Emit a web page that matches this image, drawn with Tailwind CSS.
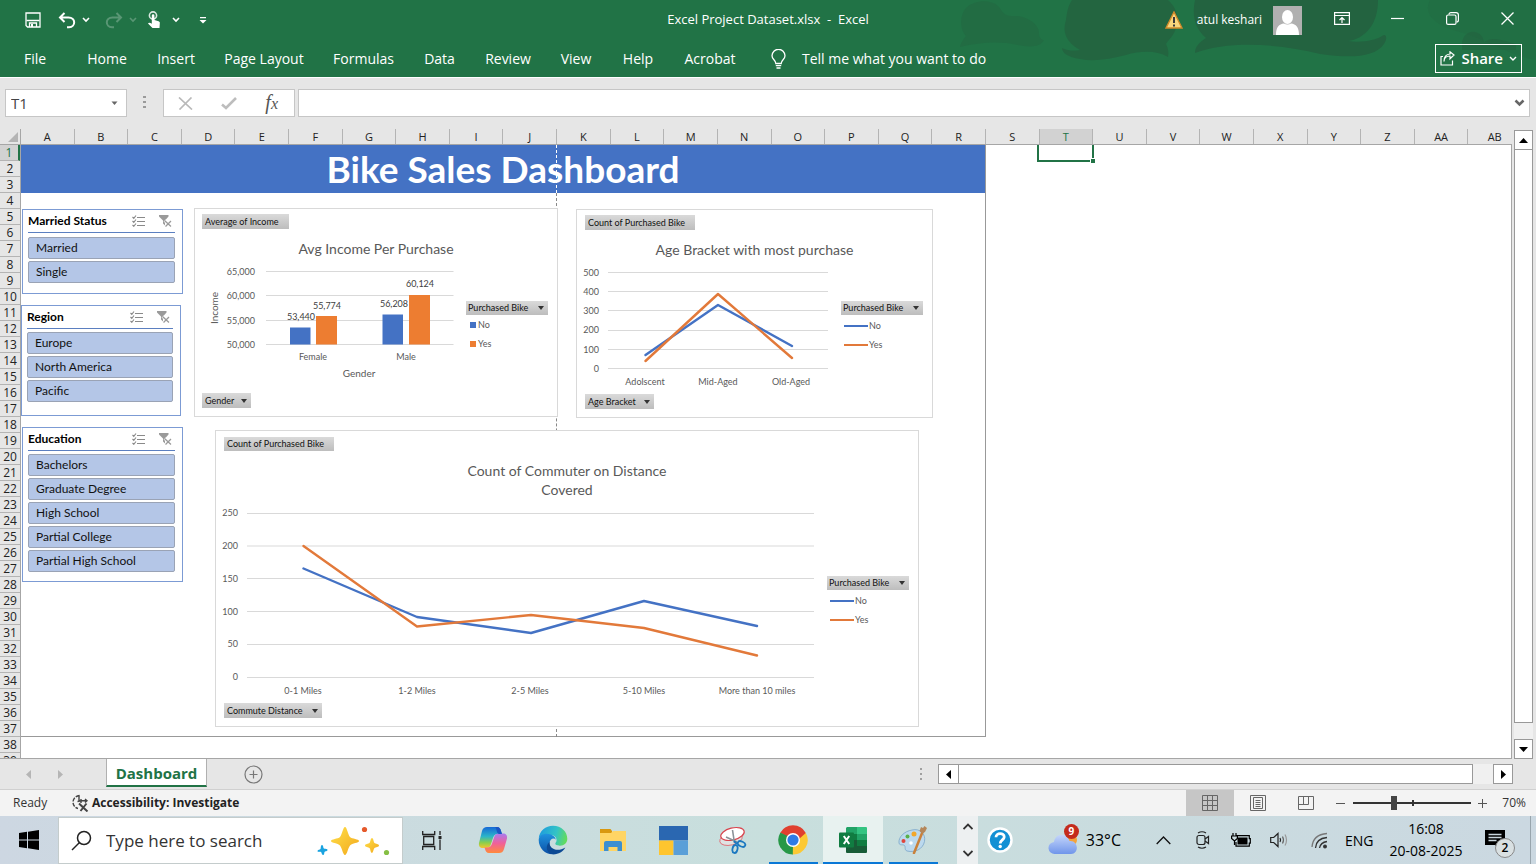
<!DOCTYPE html>
<html lang="en">
<head>
<meta charset="utf-8">
<meta name="viewport" content="width=device-width, initial-scale=1">
<title>Excel Project Dataset.xlsx - Excel</title>
<script src="https://cdn.jsdelivr.net/npm/@tailwindcss/browser@4"></script>
</head>
<body class="h-screen flex flex-col overflow-hidden bg-[#e6e6e6] text-[#222] font-['Open_Sans','Noto_Sans',sans-serif]">

<!-- Title bar and ribbon tabs -->
<header class="relative shrink-0 bg-[#217346] text-white">
  <svg class="absolute right-0 top-0" width="576" height="77" viewBox="0 0 576 77" fill="#236340" aria-hidden="true">
    <path opacity=".45" d="M0 47C1 42 3 40 6 36C0 30 -1 16 6 8C14 0 30 -1 38 6C42 10 43 16 52 16C66 15 80 24 79 34C79 38 82 40 84 40C80 48 68 47 58 45C40 41 20 42 0 47Z"/>
    <path opacity=".85" d="M112 0H208C215 6 220 16 216 28C214 36 208 40 206 44C208 48 209 52 208 57C196 50 180 51 166 55C150 59 134 62 120 59C108 57 102 53 102 48C108 51 114 51 120 50C106 42 102 32 106 20C107 12 108 6 112 0Z"/>
    <path d="M235 0H418C418 10 416 20 410 28C404 36 396 40 388 41C402 43 416 40 422 36C426 33 428 38 424 44C414 58 390 58 360 54C320 44 270 40 235 53C235 46 240 42 246 38C234 28 232 14 235 0Z"/>
    <path opacity=".6" d="M502 44C503 28 522 28 524 42C532 36 542 40 556 44V50H502Z"/>
    <path opacity=".25" d="M470 0H576V60C550 56 530 40 500 32C478 26 462 16 470 0Z"/>
  </svg>

  <div class="relative flex h-10 items-center">
    <div class="flex flex-1 items-center">
      <button aria-label="Save" class="ml-[25px] w-[33px]"><svg width="16" height="16" viewBox="0 0 16 16" fill="none" stroke="#fff" stroke-width="1.3"><path d="M1 1H15V15H2.500L1 13.500Z"/><path d="M1.500 8.500H14.500M4.500 15V11H11.500V15"/><path fill="#fff" d="M6 12h2v3H6z" stroke="none"/></svg></button>
      <button aria-label="Undo" class="w-[24px]"><svg width="18" height="17" viewBox="0 0 18 17" fill="none" stroke="#fff" stroke-width="2"><path d="M6.500 1L2 5.500L6.500 10M2 5.500H10.500C18 5.500 18 15 11 15.300H9"/></svg></button>
      <button aria-label="Undo options" class="w-[23px]"><svg width="8" height="6" viewBox="0 0 8 6" fill="none" stroke="#fff" stroke-width="1.600"><path d="M1 1L4 4L7 1"/></svg></button>
      <button aria-label="Redo" class="w-[24px] opacity-25"><svg width="18" height="17" viewBox="0 0 18 17" fill="none" stroke="#fff" stroke-width="2"><path d="M11.500 1L16 5.500L11.500 10M16 5.500H7.500C0 5.500 0 15 7 15.300H9"/></svg></button>
      <button aria-label="Redo options" class="w-[18px] opacity-25"><svg width="8" height="6" viewBox="0 0 8 6" fill="none" stroke="#fff" stroke-width="1.600"><path d="M1 1L4 4L7 1"/></svg></button>
      <button aria-label="Touch mode" class="w-[25px]"><svg width="14" height="18" viewBox="0 0 14 18"><circle cx="6" cy="4.500" r="3.600" fill="none" stroke="#d8e8df" stroke-width="1.600"/><path fill="#fff" d="M4.800 4.500a1.300 1.300 0 0 1 2.600 0V9l4.200 1.200c1.200.4 1.400 1.300 1.200 2.300L12.500 17H5.500L1 12.500c.6-1.200 2-1.200 3.800.3Z"/></svg></button>
      <button aria-label="Touch mode options" class="w-[27px]"><svg width="8" height="6" viewBox="0 0 8 6" fill="none" stroke="#fff" stroke-width="1.600"><path d="M1 1L4 4L7 1"/></svg></button>
      <button aria-label="Customize Quick Access Toolbar"><svg width="8" height="7" viewBox="0 0 8 7" fill="#fff"><path d="M1 0h6v1.300H1zM0.500 3h7L4 6.500z"/></svg></button>
    </div>
    <h1 class="whitespace-pre text-[13px]">Excel Project Dataset.xlsx  -  Excel</h1>
    <div class="flex flex-1 items-center justify-end">
      <svg class="mr-[14px]" width="18" height="18" viewBox="0 0 18 18"><path d="M9 1L17 17H1Z" fill="#f9d67c" stroke="#d08a2a" stroke-width="1.400"/><path d="M8 6h2v6H8zM8 13.500h2v2H8z" fill="#3a3a3a"/></svg>
      <span class="mr-[11px] text-[12px]">atul keshari</span>
      <svg class="mr-8" width="29" height="29" viewBox="0 0 29 29"><path fill="#b0b0b0" d="M0 0h29v29H0z"/><ellipse cx="14.500" cy="11" rx="5.500" ry="7" fill="#fff"/><path fill="#fff" d="M3 29c0-8 3-11 8-11.500c2 1.300 5 1.300 7 0c5 .5 8 3.500 8 11.500z"/></svg>
      <button aria-label="Ribbon display options" class="mb-[3px] mr-[41px]"><svg width="16" height="13" viewBox="0 0 16 13" fill="none" stroke="#fff" stroke-width="1.200"><path d="M.6.6h14.800v11.800H.6zM.6 3.500h14.800M8 11V5.500M5.500 8L8 5.500L10.500 8"/></svg></button>
      <button aria-label="Minimize" class="mb-[3px] mr-[42px]"><svg width="13" height="12" viewBox="0 0 13 12" stroke="#fff" stroke-width="1.200"><path d="M0 5.500h13"/></svg></button>
      <button aria-label="Restore" class="mb-[3px] mr-[42px]"><svg width="13" height="13" viewBox="0 0 13 13" fill="none" stroke="#fff" stroke-width="1.200"><rect x=".6" y="3" width="9.400" height="9.400" rx="1.500"/><path d="M3 2.500C3 1.400 3.700.6 5 .6h5c1.500 0 2.400.9 2.400 2.400v5c0 1.200-.8 2-1.800 2"/></svg></button>
      <button aria-label="Close" class="mb-[3px] mr-[22px]"><svg width="13" height="13" viewBox="0 0 13 13" stroke="#fff" stroke-width="1.300"><path d="M.5.5l12 12M12.500.5l-12 12"/></svg></button>
    </div>
  </div>

  <div class="relative flex h-[37px] items-center text-[14px]">
    <nav class="grid grid-cols-[70px_74px_64px_112px_87px_65px_72px_64px_60px_84px] text-center">
      <button>File</button><button>Home</button><button>Insert</button><button>Page Layout</button><button>Formulas</button><button>Data</button><button>Review</button><button>View</button><button>Help</button><button>Acrobat</button>
    </nav>
    <button class="flex items-center gap-4 pl-[19px]">
      <svg width="15" height="20" viewBox="0 0 15 20" fill="none" stroke="#fff" stroke-width="1.300"><path d="M4.800 14.500C4.800 11 1 10.500 1 6.800a6.500 6.500 0 0 1 13 0c0 3.700-3.800 4.200-3.800 7.700zM4.800 16.700h5.400M5.500 19h4"/></svg>
      <span>Tell me what you want to do</span>
    </button>
    <button class="ml-auto mr-[14px] flex h-[29px] items-center gap-[6px] border border-white px-1 font-semibold">
      <svg width="15" height="15" viewBox="0 0 15 15" fill="none" stroke="#fff" stroke-width="1.200"><path d="M3 5.500H1V14h11.500V9.500M4 10.500C4 6.500 7 5 10 5V7.800L14 4L10 .8V3C6 3.200 4 6 4 10.500Z"/></svg>
      <span class="text-[15px]">Share</span>
      <svg width="8" height="6" viewBox="0 0 8 6" fill="none" stroke="#fff" stroke-width="1.400"><path d="M1 1L4 4L7 1"/></svg>
    </button>
  </div>
</header>

<!-- Name box and formula bar -->
<div class="flex h-[52px] shrink-0 items-start border-t border-white pl-[5px] pr-[6px] pt-[11px]">
  <div class="flex h-7 w-[122px] items-center border border-[#c6c6c6] bg-white">
    <input aria-label="Name box" value="T1" class="w-[105px] pl-[5px] text-[15px] text-[#444] outline-none">
    <button aria-label="Name box list"><svg width="7" height="5" viewBox="0 0 7 5" fill="#666"><path d="M.5.5h6L3.500 4z"/></svg></button>
  </div>
  <svg class="mx-[15px] mt-[7px]" width="6" height="14" viewBox="0 0 6 14" fill="#9a9a9a"><path d="M1 0h3v2H1zM1 5h3v2H1zM1 10h3v2H1z"/></svg>
  <div class="flex h-7 w-[132px] items-center justify-between border border-[#c6c6c6] bg-white pl-[14px] pr-[14px]">
    <button aria-label="Cancel"><svg width="15" height="13" viewBox="0 0 15 13" fill="none" stroke="#b9b9b9" stroke-width="1.700"><path d="M1 .5L14 12.500M13.500.5L1.500 12.500"/></svg></button>
    <button aria-label="Enter"><svg width="16" height="13" viewBox="0 0 16 13" fill="none" stroke="#bdbdbd" stroke-width="2.600"><path d="M1 7.500L5 11L15 1"/></svg></button>
    <button aria-label="Insert function" class="pr-[2px] font-['Liberation_Serif',serif] text-[20px] italic leading-5 text-[#555]">f<span class="text-[16px]">x</span></button>
  </div>
  <div class="ml-[3px] flex h-7 flex-1 items-center border border-[#c6c6c6] bg-white pr-1">
    <input aria-label="Formula bar" class="min-w-0 flex-1 px-2 outline-none">
    <button aria-label="Expand formula bar"><svg width="11" height="8" viewBox="0 0 11 8" fill="none" stroke="#666" stroke-width="2.500"><path d="M1.500 1.500L5.500 5.500L9.500 1.500"/></svg></button>
  </div>
</div>

<!-- Worksheet -->
<main class="flex min-h-0 flex-1">
  <div class="grid min-w-0 flex-1 grid-cols-[21px_minmax(0,1fr)] grid-rows-[16px_minmax(0,1fr)] border-b border-[#a6a6a6]">
    <div class="flex items-end justify-end border-b border-r border-[#a6a6a6] pb-[2px] pr-[2px]">
      <svg width="10" height="10" viewBox="0 0 10 10" fill="#b4b4b4"><path d="M10 0v10H0z"/></svg>
    </div>
    <div class="overflow-hidden border-b border-[#a6a6a6]">
      <div id="cols" class="grid h-[15px] w-[1501px] grid-cols-28 text-center text-[11px] leading-4 text-[#222]"></div>
    </div>
    <div id="rows" class="overflow-hidden border-r border-[#a6a6a6] text-center text-[12px] leading-4 text-[#222]"></div>

    <div class="relative overflow-hidden border-r border-[#a6a6a6] bg-white">
      <div class="absolute left-0 top-0 h-[592px] w-[965px] border-b border-r border-[#999]"></div>
      <h2 class="absolute left-0 top-0 flex h-12 w-[964px] items-center justify-center bg-[#4472c4] font-['Lato',sans-serif] text-[37px] font-bold text-white">Bike Sales Dashboard</h2>
      <!-- Page break -->
      <div class="absolute left-[535px] top-0 h-12 border-l border-dashed border-white"></div>
      <div class="absolute left-[535px] top-12 h-[544px] border-l border-dashed border-[#888]"></div>
      <!-- Selected cell -->
      <div class="absolute left-[1016px] top-[-2px] h-[19px] w-[57px] border-2 border-[#217346]"></div>
      <div class="absolute left-[1069px] top-[13px] h-[5px] w-[5px] border-l border-t border-white bg-[#217346]"></div>

      <!-- Slicers -->
      <section class="absolute left-px top-16 h-[85px] w-[161px] border border-[#7c9bd4] bg-white pl-[5px] pr-[7px] font-['Lato',sans-serif] text-[12px] text-[#111]" aria-label="Married Status">
        <div class="mb-1 flex h-[23px] items-center border-b border-[#5b7fc0]">
          <h3 class="flex-1 whitespace-nowrap text-[12px] font-bold text-black">Married Status</h3>
          <button aria-label="Multi-select" class="mr-[14px]"><svg width="13" height="12"><use href="#multi"/></svg></button>
          <button aria-label="Clear filter" class="mr-[3px]"><svg width="13" height="12"><use href="#clear"/></svg></button>
        </div>
        <div class="flex flex-col gap-[2px]">
          <button class="h-[22px] rounded-[2px] border border-[#9aa3b5] bg-[#b4c6e7] pl-[7px] text-left">Married</button>
          <button class="h-[22px] rounded-[2px] border border-[#9aa3b5] bg-[#b4c6e7] pl-[7px] text-left">Single</button>
        </div>
      </section>
      <section class="absolute left-0 top-40 h-[111px] w-[160px] border border-[#7c9bd4] bg-white pl-[5px] pr-[7px] font-['Lato',sans-serif] text-[12px] text-[#111]" aria-label="Region">
        <div class="mb-[3px] flex h-[23px] items-center border-b border-[#5b7fc0]">
          <h3 class="flex-1 whitespace-nowrap text-[12px] font-bold text-black">Region</h3>
          <button aria-label="Multi-select" class="mr-[14px]"><svg width="13" height="12"><use href="#multi"/></svg></button>
          <button aria-label="Clear filter" class="mr-[3px]"><svg width="13" height="12"><use href="#clear"/></svg></button>
        </div>
        <div class="flex flex-col gap-[2px]">
          <button class="h-[22px] rounded-[2px] border border-[#9aa3b5] bg-[#b4c6e7] pl-[7px] text-left">Europe</button>
          <button class="h-[22px] rounded-[2px] border border-[#9aa3b5] bg-[#b4c6e7] pl-[7px] text-left">North America</button>
          <button class="h-[22px] rounded-[2px] border border-[#9aa3b5] bg-[#b4c6e7] pl-[7px] text-left">Pacific</button>
        </div>
      </section>
      <section class="absolute left-px top-[282px] h-[155px] w-[161px] border border-[#7c9bd4] bg-white pl-[5px] pr-[7px] font-['Lato',sans-serif] text-[12px] text-[#111]" aria-label="Education">
        <div class="mb-[3px] flex h-[23px] items-center border-b border-[#5b7fc0]">
          <h3 class="flex-1 whitespace-nowrap text-[12px] font-bold text-black">Education</h3>
          <button aria-label="Multi-select" class="mr-[14px]"><svg width="13" height="12"><use href="#multi"/></svg></button>
          <button aria-label="Clear filter" class="mr-[3px]"><svg width="13" height="12"><use href="#clear"/></svg></button>
        </div>
        <div class="flex flex-col gap-[2px]">
          <button class="h-[22px] rounded-[2px] border border-[#9aa3b5] bg-[#b4c6e7] pl-[7px] text-left">Bachelors</button>
          <button class="h-[22px] rounded-[2px] border border-[#9aa3b5] bg-[#b4c6e7] pl-[7px] text-left">Graduate Degree</button>
          <button class="h-[22px] rounded-[2px] border border-[#9aa3b5] bg-[#b4c6e7] pl-[7px] text-left">High School</button>
          <button class="h-[22px] rounded-[2px] border border-[#9aa3b5] bg-[#b4c6e7] pl-[7px] text-left">Partial College</button>
          <button class="h-[22px] rounded-[2px] border border-[#9aa3b5] bg-[#b4c6e7] pl-[7px] text-left">Partial High School</button>
        </div>
      </section>

      <!-- Income chart -->
      <section class="absolute left-[173px] top-[63px] flex h-[209px] w-[364px] flex-col items-start border border-[#d9d9d9] bg-white pl-[7px] pt-[5px] font-['Lato',sans-serif] text-[9px] text-[#595959]">
        <button class="h-[15px] w-[87px] bg-linear-to-b from-[#dadada] to-[#bdbdbd] pl-[3px] text-left text-[#111]">Average of Income</button>
        <h3 class="mt-2 h-6 w-full pr-[7px] text-center text-[14px] leading-6">Avg Income Per Purchase</h3>
        <div class="flex">
          <svg width="258" height="124" viewBox="202 261 258 124" fill="#595959">
            <path d="M266 271.500H453.500M266 295.500H453.500M266 320.500H453.500M266 344.500H453.500" stroke="#d9d9d9" fill="none"/>
            <path fill="#4472c4" d="M290 327.500h20.500v17H290zM382.500 314.500h20.500v30h-20.500z"/>
            <path fill="#ed7d31" d="M316 316h21v28.500h-21zM409 295h21v49.500h-21z"/>
            <g text-anchor="end"><text x="255" y="275">65,000</text><text x="255" y="299">60,000</text><text x="255" y="324">55,000</text><text x="255" y="348">50,000</text></g>
            <g text-anchor="middle" fill="#404040"><text x="301" y="320">53,440</text><text x="327" y="309">55,774</text><text x="394" y="307">56,208</text><text x="420" y="287">60,124</text></g>
            <g text-anchor="middle"><text x="313" y="360">Female</text><text x="406" y="360">Male</text><text x="359" y="377" font-size="10">Gender</text><text transform="translate(218 308) rotate(-90)" font-size="10">Income</text></g>
          </svg>
          <div class="ml-[6px] mt-10">
            <button class="flex h-[14px] w-[82px] items-center justify-between bg-linear-to-b from-[#dadada] to-[#bdbdbd] pl-[2px] pr-1 text-[#111]">Purchased Bike<svg width="6" height="4" fill="#333"><path d="M0 0h6L3 4z"/></svg></button>
            <div class="flex h-[19px] items-center gap-[2px] pl-[4px]"><span class="size-[6px] bg-[#4472c4]"></span>No</div>
            <div class="flex h-[19px] items-center gap-[2px] pl-[4px]"><span class="size-[6px] bg-[#ed7d31]"></span>Yes</div>
          </div>
        </div>
        <button class="mt-2 flex h-[15px] w-[49px] items-center justify-between bg-linear-to-b from-[#dadada] to-[#bdbdbd] pl-[3px] pr-1 text-[#111]">Gender<svg width="6" height="4" fill="#333"><path d="M0 0h6L3 4z"/></svg></button>
      </section>

      <!-- Age bracket chart -->
      <section class="absolute left-[555px] top-16 flex h-[209px] w-[357px] flex-col items-start border border-[#d9d9d9] bg-white pl-[8px] pt-[5px] font-['Lato',sans-serif] text-[9px] text-[#595959]">
        <button class="h-[15px] w-[110px] bg-linear-to-b from-[#dadada] to-[#bdbdbd] pl-[3px] text-left text-[#111]">Count of Purchased Bike</button>
        <h3 class="mt-2 h-6 w-full pr-[8px] text-center text-[14px] leading-6">Age Bracket with most purchase</h3>
        <div class="flex">
          <svg class="overflow-visible" width="250" height="126" viewBox="585 262 250 126" fill="#595959">
            <path d="M608 272.500H828M608 291.500H828M608 310.500H828M608 330.500H828M608 349.500H828M608 368.500H828" stroke="#d9d9d9" fill="none"/>
            <g fill="none" stroke-width="2.400" stroke-linecap="round" stroke-linejoin="round"><path stroke="#4472c4" d="M645.500 355L718 305L792 346"/><path stroke="#e2793a" d="M645.500 361L718 294L792 358"/></g>
            <g text-anchor="end"><text x="599" y="276">500</text><text x="599" y="295">400</text><text x="599" y="314">300</text><text x="599" y="333">200</text><text x="599" y="353">100</text><text x="599" y="372">0</text></g>
            <g text-anchor="middle"><text x="645" y="385">Adolscent</text><text x="718" y="385">Mid-Aged</text><text x="791" y="385">Old-Aged</text></g>
          </svg>
          <div class="ml-[6px] mt-[39px]">
            <button class="flex h-[14px] w-[82px] items-center justify-between bg-linear-to-b from-[#dadada] to-[#bdbdbd] pl-[2px] pr-1 text-[#111]">Purchased Bike<svg width="6" height="4" fill="#333"><path d="M0 0h6L3 4z"/></svg></button>
            <div class="mt-[1px] flex h-[19px] items-center gap-px pl-[3px]"><span class="h-[2px] w-6 bg-[#4472c4]"></span>No</div>
            <div class="flex h-[19px] items-center gap-px pl-[3px]"><span class="h-[2px] w-6 bg-[#e2793a]"></span>Yes</div>
          </div>
        </div>
        <button class="mt-[6px] flex h-[15px] w-[69px] items-center justify-between bg-linear-to-b from-[#dadada] to-[#bdbdbd] pl-[3px] pr-1 text-[#111]">Age Bracket<svg width="6" height="4" fill="#333"><path d="M0 0h6L3 4z"/></svg></button>
      </section>

      <!-- Commute chart -->
      <section class="absolute left-[194px] top-[285px] flex h-[297px] w-[704px] flex-col items-start border border-[#d9d9d9] bg-white pl-[8px] pt-[6px] font-['Lato',sans-serif] text-[9px] text-[#595959]">
        <button class="h-[14px] w-[110px] bg-linear-to-b from-[#dadada] to-[#bdbdbd] pl-[3px] text-left text-[#111]">Count of Purchased Bike</button>
        <h3 class="mt-[10px] w-full pr-[8px] text-center text-[14px] leading-[19px]">Count of Commuter on Distance<br>Covered</h3>
        <div class="mt-px flex">
          <svg class="overflow-visible" width="597" height="197" viewBox="224 500 597 197" fill="#595959">
            <path d="M247 513.500H814M247 546H814M247 578.500H814M247 611.500H814M247 644.500H814M247 677.500H814" stroke="#d9d9d9" fill="none"/>
            <g fill="none" stroke-width="2.400" stroke-linecap="round" stroke-linejoin="round"><path stroke="#4472c4" d="M303.500 568.500L417 617L531 633L644 601L757 626"/><path stroke="#e2793a" d="M303.500 546L417 626.500L531 615L644 628L757 655.500"/></g>
            <g text-anchor="end"><text x="238" y="516">250</text><text x="238" y="549">200</text><text x="238" y="582">150</text><text x="238" y="615">100</text><text x="238" y="647">50</text><text x="238" y="680">0</text></g>
            <g text-anchor="middle"><text x="303" y="694">0-1 Miles</text><text x="417" y="694">1-2 Miles</text><text x="530" y="694">2-5 Miles</text><text x="644" y="694">5-10 Miles</text><text x="757" y="694">More than 10 miles</text></g>
          </svg>
          <div class="ml-[6px] mt-[76px]">
            <button class="flex h-[14px] w-[82px] items-center justify-between bg-linear-to-b from-[#dadada] to-[#bdbdbd] pl-[2px] pr-1 text-[#111]">Purchased Bike<svg width="6" height="4" fill="#333"><path d="M0 0h6L3 4z"/></svg></button>
            <div class="mt-[1px] flex h-[19px] items-center gap-px pl-[3px]"><span class="h-[2px] w-6 bg-[#4472c4]"></span>No</div>
            <div class="flex h-[19px] items-center gap-px pl-[3px]"><span class="h-[2px] w-6 bg-[#e2793a]"></span>Yes</div>
          </div>
        </div>
        <button class="mt-[6px] flex h-[15px] w-[98px] items-center justify-between bg-linear-to-b from-[#dadada] to-[#bdbdbd] pl-[3px] pr-1 text-[#111]">Commute Distance<svg width="6" height="4" fill="#333"><path d="M0 0h6L3 4z"/></svg></button>
      </section>
    </div>
  </div>

  <!-- Vertical scroll bar -->
  <div class="flex w-6 shrink-0 flex-col pl-[2px] pr-[3px] pt-px">
    <button aria-label="Scroll up" class="flex h-5 shrink-0 items-center justify-center border border-[#999] bg-white"><svg width="9" height="5"><path d="M4.500 0L9 5H0z"/></svg></button>
    <div class="flex-1 border-x border-[#999] bg-white"></div>
    <div class="h-[17px] shrink-0 border-t border-[#999] bg-[#f0f0f0]"></div>
    <button aria-label="Scroll down" class="flex h-5 shrink-0 items-center justify-center border border-[#999] bg-white"><svg width="9" height="5"><path d="M4.500 5L9 0H0z"/></svg></button>
  </div>
</main>

<!-- Sheet tabs and horizontal scroll bar -->
<div class="flex h-[31px] shrink-0 items-start border-b border-[#d0d0d0]">
  <div class="flex h-[30px] w-[106px] items-center gap-[27px] pl-[26px]">
    <button aria-label="Previous sheet"><svg width="5" height="9" fill="#b5b5b5"><path d="M5 0v9L0 4.500z"/></svg></button>
    <button aria-label="Next sheet"><svg width="5" height="9" fill="#b5b5b5"><path d="M0 0v9l5-4.500z"/></svg></button>
  </div>
  <button class="h-7 w-[101px] border-x border-b-2 border-x-[#b0b0b0] border-b-[#217346] bg-white pt-[2px] text-[15px] font-bold leading-6 text-[#217346]">Dashboard</button>
  <button aria-label="New sheet" class="ml-[37px] mt-[6px]"><svg width="19" height="19" viewBox="0 0 19 19" fill="none" stroke="#777" stroke-width="1.200"><circle cx="9.500" cy="9.500" r="8.500"/><path d="M9.500 5.500v8M5.500 9.500h8"/></svg></button>
  <svg class="ml-auto mr-[14px] mt-[9px]" width="5" height="13" fill="#a0a0a0"><path d="M1 0h2v2H1zM1 5h2v2H1zM1 10h2v2H1z"/></svg>
  <div class="mr-[23px] mt-[5px] flex h-5 w-[575px]">
    <button aria-label="Scroll left" class="flex w-[21px] items-center justify-center border border-[#999] bg-white"><svg width="5" height="9"><path d="M5 0v9L0 4.500z"/></svg></button>
    <div class="flex-1 border-y border-r border-[#999] bg-white"></div>
    <div class="w-5 bg-[#f0f0f0]"></div>
    <button aria-label="Scroll right" class="flex w-5 items-center justify-center border border-[#999] bg-white"><svg width="5" height="9"><path d="M0 0v9l5-4.500z"/></svg></button>
  </div>
</div>

<!-- Status bar -->
<footer class="flex h-[26px] shrink-0 items-center bg-[#f3f3f3] pl-[13px] text-[12px] text-[#333]">
  <span class="w-[58px]">Ready</span>
  <button class="flex items-center gap-[3px] font-bold text-[#222]">
    <svg width="18" height="18" viewBox="0 0 18 18" fill="none" stroke="#444" stroke-width="1.400"><path d="M8.500 1.500A7 7 0 0 0 2 8C2 11 4 14 7 14.500" stroke-dasharray="4 1.300"/><path d="M8 1.500V8M6.500 7.500L10 6.800H16M14 5l2 1.800-2 1.800M10 5v4"/><path stroke-width="2" d="M8 9.500L16.500 17.500M15.500 9.500L9.500 17"/></svg>
    <span>Accessibility: Investigate</span>
  </button>
  <div class="ml-auto flex h-full items-center">
    <button aria-label="Normal view" class="flex h-full w-12 items-center justify-center bg-[#c6c6c6]"><svg width="16" height="16" viewBox="0 0 16 16" fill="none" stroke="#666"><path d="M.5.500h15v15H.5zM5.500.500v15M10.500.500v15M.5 5.500h15M.5 10.500h15"/></svg></button>
    <button aria-label="Page layout view" class="flex h-full w-12 items-center justify-center"><svg width="16" height="16" viewBox="0 0 16 16" fill="none" stroke="#666"><path d="M.5.500h15v15H.5zM3.500 2.500h9v11h-9zM5.500 5.500h5M5.500 7.500h5M5.500 9.500h5M5.500 11.500h5"/></svg></button>
    <button aria-label="Page break preview" class="flex h-full w-12 items-center justify-center"><svg width="16" height="14" viewBox="0 0 16 14" fill="none" stroke="#666"><path d="M.5.500h15v13H.5zM.5 8.500h10v-8M5.500.500v8"/></svg></button>
    <button aria-label="Zoom out" class="ml-[6px]"><svg width="9" height="9" stroke="#555"><path d="M0 4.500h9"/></svg></button>
    <div class="relative ml-2 flex w-[118px] items-center">
      <input type="range" aria-label="Zoom" min="0" max="100" value="34" class="h-[2px] w-full appearance-none bg-[#333] [&::-webkit-slider-thumb]:h-[14px] [&::-webkit-slider-thumb]:w-[6px] [&::-webkit-slider-thumb]:appearance-none [&::-webkit-slider-thumb]:bg-[#444]">
      <span class="absolute left-1/2 top-1/2 h-[6px] w-[2px] -translate-y-1/2 bg-[#333]"></span>
    </div>
    <button aria-label="Zoom in" class="ml-[7px]"><svg width="9" height="9" stroke="#555"><path d="M0 4.500h9M4.500 0v9"/></svg></button>
    <span class="w-[49px] pr-[10px] text-right">70%</span>
  </div>
</footer>

<!-- Windows taskbar -->
<div class="flex h-12 shrink-0 items-center bg-linear-to-r from-[#cdd7e2] via-[#c8dfdd] to-[#cbd8e1] text-black">
  <button aria-label="Start" class="flex w-[58px] justify-center"><svg width="20" height="20" viewBox="0 0 20 20"><path d="M0 3L8 1.800V9.500H0zM9 1.700L20 0V9.500H9zM0 10.500H8V18.200L0 17zM9 10.500H20V20L9 18.300z"/></svg></button>
  <label class="flex h-[47px] w-[345px] items-center self-end border border-[#c4cccc] bg-white pl-3">
    <svg width="21" height="21" viewBox="0 0 21 21" fill="none" stroke="#222" stroke-width="1.500"><circle cx="13" cy="8" r="6.500"/><path d="M8.500 12.500L1 20"/></svg>
    <input type="search" aria-label="Search" placeholder="Type here to search" class="ml-[14px] w-[210px] text-[17px] outline-none placeholder:text-[#333]">
    <svg width="74" height="30" viewBox="0 0 74 30"><defs><linearGradient id="gold" x1="0" y1="0" x2="1" y2="1"><stop offset="0" stop-color="#ffe04a"/><stop offset="1" stop-color="#f2a81c"/></linearGradient></defs><path fill="url(#gold)" d="M29 1C31 1 32 9 34 11C36 13 43 13 43 15C43 17 36 17 34 19.500C32 22 31 29 29 29C27 29 26 22 24 19.500C22 17 15 17 15 15C15 13 22 13 24 11C26 9 27 1 29 1Z"/><path fill="url(#gold)" d="M56 12C57.500 12 57.500 16 58.500 17C59.500 18 63 18 63 19.500C63 21 59.500 21 58.500 22C57.500 23 57 27 56 27C54.500 27 54.500 23 53.500 22C52.500 21 49 21 49 19.500C49 18 52.500 18 53.500 17C54.500 16 54.500 12 56 12Z"/><path fill="#1aa3e0" d="M6 19c1.500 0 1 3 2 3.500s3.500 0 3.500 1.500-2.500 1-3 2 0 3-1.500 3-1-2.500-2-3-3.500.5-3.500-1 2.500-1 3-2 0-4 1.500-4z"/><circle cx="48.500" cy="3.500" r="2.600" fill="#e5592b"/><circle cx="70.500" cy="26.500" r="2.600" fill="#86bf45"/></svg>
  </label>
  <button aria-label="Task view" class="flex w-[60px] justify-center pr-[2px]"><svg width="20" height="19" viewBox="0 0 20 19" fill="none" stroke="#222" stroke-width="1.300"><path d="M.7 0v3.500h12V0M.7 19v-3.500h12V19M1.700 5.500h10v8h-10zM18 0v4M18 8.500V19"/><path fill="#222" stroke="none" d="M16.500 5h3v3h-3z"/></svg></button>
  <button aria-label="Copilot" class="flex w-[60px] justify-center"><svg width="30" height="28" viewBox="0 0 30 28"><defs><linearGradient id="cpa" x1="0" y1="0" x2="0" y2="1"><stop offset="0" stop-color="#1668d6"/><stop offset=".45" stop-color="#2bb5c9"/><stop offset=".75" stop-color="#8ccf4a"/><stop offset="1" stop-color="#f5c62c"/></linearGradient><linearGradient id="cpb" x1="0" y1="0" x2="0" y2="1"><stop offset="0" stop-color="#a77cf0"/><stop offset=".5" stop-color="#f0609a"/><stop offset="1" stop-color="#ff8a3c"/></linearGradient></defs><path fill="url(#cpa)" d="M9 1h10c2.500 0 3.500 2 4 4l1 3h-4c-3 0-4 1.500-5 4l-2 6c-1 3-2 4-5 4H5c-3 0-4.500-2-4-5L4 5C5 2 6.500 1 9 1Z"/><path fill="url(#cpb)" d="M21 27H11c-2.500 0-3.500-2-4-4l-.5-1.500H9c3 0 4-1.500 5-4l2-6c1-3 2-4 5-4h4c3 0 4.500 2 4 5l-3 10.500C25 26 23.500 27 21 27Z"/><path fill="#1b55c4" d="M17 1h2c2.500 0 3.500 2 4 4l1 3h-3c-3-1-2-6-4-7Z"/></svg></button>
  <button aria-label="Microsoft Edge" class="flex w-[60px] justify-center"><svg width="30" height="30" viewBox="0 0 30 30"><defs><linearGradient id="eda" x1="0" y1=".3" x2="1" y2=".5"><stop offset="0" stop-color="#1d9bde"/><stop offset=".6" stop-color="#33c3c6"/><stop offset="1" stop-color="#63dc5c"/></linearGradient><linearGradient id="edb" x1="0" y1="0" x2="0" y2="1"><stop offset="0" stop-color="#1f93df"/><stop offset="1" stop-color="#0c4fa5"/></linearGradient></defs><path fill="url(#eda)" d="M.8 13C1.500 6 7.500.7 15 .7c8.500 0 14.300 6 14.300 13 0 4-3 7-7.300 7-4 0-5.500-1.700-4.200-3.200 1.600-2 1-6.500-4.300-7.500C8 9 2.500 10 .8 13Z"/><path fill="url(#edb)" d="M.7 15C.7 10.500 5 8.500 9 8.700c5 .2 8.500 3 8.800 6-2-2.500-6.300-.5-6.300 4 0 5 4.500 8.500 9 8.300-2 1.500-4 2.300-6 2.300C7 29.300.7 23 .7 15Z"/><path fill="#0d4a94" d="M11.500 17c-.5 7 8 10.500 15.800 5.500-2 4-6.800 6.800-12 6.800C8 29 7 20 11.500 17Z"/></svg></button>
  <button aria-label="File Explorer" class="flex w-[60px] justify-center"><svg width="26" height="23" viewBox="0 0 26 23"><path fill="#d9980f" d="M0 0h10.500l1.500 2v3H0z"/><path fill="#ffd565" d="M0 4h11l2-2h13v20H0z"/><path fill="#3d8fd0" d="M6 12h14a2 2 0 0 1 2 2v8h-4.500v-4h-9v4H4v-8a2 2 0 0 1 2-2z"/></svg></button>
  <button aria-label="Dashboard app" class="flex w-[60px] justify-center"><svg width="29" height="29"><path fill="#2a67b1" d="M0 0h29v14.500H0z"/><path fill="#fec52e" d="M0 14.500h14.500V29H0z"/><path fill="#5a9fd8" d="M14.500 14.500H29V29H14.500z"/></svg></button>
  <button aria-label="Snipping Tool" class="flex w-[60px] justify-center"><svg width="28" height="28" viewBox="0 0 28 28" fill="none"><ellipse cx="12" cy="13" rx="11.500" ry="6" transform="rotate(-14 12 13)" fill="#dfe3e3" stroke="#e0626a" stroke-width=".8"/><ellipse cx="13.500" cy="8" rx="12" ry="6" transform="rotate(-14 13.500 8)" fill="#fff" stroke="#d8434d" stroke-width="1.200"/><path stroke="#8b9298" stroke-width="1.600" d="M13.500 4l2 13M7 11l11 5"/><g stroke="#1c78c0" stroke-width="1.800"><ellipse cx="16" cy="23" rx="2.500" ry="4" transform="rotate(12 16 23)"/><ellipse cx="22.500" cy="18" rx="4" ry="2.500" transform="rotate(25 22.500 18)"/><path d="M15 15l3 3"/></g></svg></button>
  <button aria-label="Google Chrome" class="relative flex h-full w-[60px] items-center justify-center"><svg width="30" height="30" viewBox="0 0 30 30"><path fill="#e0402f" d="M15 15L2.300 7.700A14.500 14.500 0 0 1 27.700 7.700z"/><path fill="#fcc934" d="M15 15L27.700 7.700A14.500 14.500 0 0 1 15 29.500z"/><path fill="#279847" d="M15 15V29.500A14.500 14.500 0 0 1 2.300 7.700z"/><path fill="#e0402f" d="M15 8h12.700L20 15z"/><path fill="#fcc934" d="M21 18.500L14.800 29.500L15 18z"/><path fill="#279847" d="M9 18.500L2.300 7.700L12 12z"/><circle cx="15" cy="15" r="7" fill="#fff"/><circle cx="15" cy="15" r="5.600" fill="#2f7be6"/></svg><span class="absolute bottom-0 h-[2px] w-[49px] bg-[#0a78d6]"></span></button>
  <button aria-label="Excel" class="relative flex h-full w-[60px] items-center justify-center bg-[#e8f2f0]"><svg width="28" height="26" viewBox="0 0 28 26"><path fill="#21a366" d="M8 0h10v13H7V1z"/><path fill="#33c481" d="M18 0h9a1 1 0 0 1 1 1v6H18z"/><path fill="#21a366" d="M18 7h10v6H18z"/><path fill="#107c41" d="M18 13h10v6H18zM7 7h11v6H7z"/><path fill="#185c37" d="M7 13h11v6h10v6a1 1 0 0 1-1 1H8a1 1 0 0 1-1-1z"/><rect y="5.500" width="15" height="15" rx="1" fill="#107c41"/><path stroke="#fff" stroke-width="2" d="M4.800 9l5.400 8M10.200 9l-5.400 8"/></svg><span class="absolute bottom-0 h-[2px] w-full bg-[#0a78d6]"></span></button>
  <button aria-label="Paint" class="relative flex h-full w-[60px] items-center justify-center"><svg width="30" height="28" viewBox="0 0 30 28"><path fill="#bcd9ee" stroke="#7ba6c8" stroke-width=".8" d="M14 4C22 2 28 8 26.500 15.500C25 23 17 27 9 25C6 24 8 21 6.500 19.500C5 18 1.500 20 1 17C.3 11 6 5.500 14 4Z"/><circle cx="5.500" cy="15" r="2" fill="#e0453c"/><circle cx="9.500" cy="10.500" r="2" fill="#58b04a"/><circle cx="16" cy="8" r="2.500" fill="#f2a72c"/><circle cx="13" cy="17" r="1.800" fill="#fff"/><path stroke="#c9813b" stroke-width="2.500" stroke-linecap="round" d="M16 27L24.500 6"/><path fill="#b5875a" d="M21.500 5L23 1l2 1 1.500-2 2.500 2-2 4-3 1.500z"/></svg><span class="absolute bottom-0 h-[2px] w-[49px] bg-[#0a78d6]"></span></button>
  <div class="ml-[14px] flex h-full w-[21px] flex-col items-center justify-between bg-[#edf0f1] py-[7px]">
    <button aria-label="Previous apps"><svg width="10" height="7" fill="none" stroke="#333" stroke-width="1.800"><path d="M.5 6L5 1.500L9.500 6"/></svg></button>
    <button aria-label="Next apps"><svg width="10" height="7" fill="none" stroke="#333" stroke-width="1.800"><path d="M.5 1L5 5.500L9.500 1"/></svg></button>
  </div>
  <button aria-label="Help" class="ml-[9px]"><svg width="26" height="26" viewBox="0 0 26 26"><circle cx="13" cy="13" r="11.500" fill="#1390d4" stroke="#fff" stroke-width="2.500"/><path fill="none" stroke="#fff" stroke-width="2.800" d="M9 10.300C9 5.500 17.200 5.500 17.200 10C17.200 12.800 13.200 13 13.200 16.500"/><circle cx="13.200" cy="19.500" r="1.700" fill="#fff"/></svg></button>
  <button class="ml-auto flex items-center gap-[8px] text-[16px]">
    <span class="relative">
      <svg width="30" height="30" viewBox="0 0 30 30"><defs><linearGradient id="cl" x1="0" y1="0" x2="0" y2="1"><stop offset="0" stop-color="#c5d6fb"/><stop offset="1" stop-color="#7095ea"/></linearGradient></defs><circle cx="23" cy="15" r="6" fill="#f5a33a"/><path fill="url(#cl)" d="M7 29a6 6 0 0 1-1-12C7 8 19 7 21.500 16c9-1 10 13 1.500 13z"/></svg>
      <span class="absolute -right-px -top-px flex size-[15px] items-center justify-center rounded-full bg-[#c42b1c] text-[10px] font-bold text-white">9</span>
    </span>33°C</button>
  <button aria-label="Show hidden icons" class="ml-[35px]"><svg width="15" height="9" fill="none" stroke="#111" stroke-width="1.300"><path d="M.7 8L7.500 1L14.300 8"/></svg></button>
  <button aria-label="Meet Now" class="ml-[25px]"><svg width="14" height="18" viewBox="0 0 14 18" fill="none" stroke="#222" stroke-width="1.200"><rect x="1" y="4.500" width="8" height="9" rx="2"/><path d="M9 8l3.500-2.500v7L9 10M2 2Q6 -.5 10 2M2 16Q6 18.500 10 16"/></svg></button>
  <button aria-label="Battery" class="ml-[21px]"><svg width="20" height="14" viewBox="0 0 20 14"><path d="M6.500 4.500h10v7h-10z"/><path fill="none" stroke="#000" stroke-width="1.200" d="M5 2.700h13.300v3h1v4.500h-1v3H5V9M2 0v3M5 0v3M.6 3h5.800v2.500L3.500 8L.6 5.500zM3.500 8v4"/></svg></button>
  <button aria-label="Volume" class="ml-[19px]"><svg width="18" height="16" viewBox="0 0 18 16" fill="none" stroke="#222" stroke-width="1.200"><path d="M.7 5.500h3L8 1.500v13l-4.300-4h-3zM10 6Q11.200 8 10 10"/><path stroke="#666" d="M12.500 4.500Q14.500 8 12.500 11.500"/><path stroke="#999" d="M15 2.500Q18 8 15 13.500"/></svg></button>
  <button aria-label="Network" class="ml-[23px]"><svg width="17" height="17" viewBox="0 0 17 17" fill="none" stroke="#333" stroke-width="1.300"><path stroke="#777" d="M1 15Q2 2.500 16 1.500"/><path d="M4.500 16Q5 6.500 16 5.500M8.500 16Q9.500 10.500 16 9.500"/><circle cx="14" cy="14.500" r="1.300" fill="#333"/></svg></button>
  <button class="ml-[17px] w-[28px] text-[14px]">ENG</button>
  <button class="ml-[14px] w-[78px] whitespace-nowrap text-center text-[14px] leading-[22px]">16:08<br>20-08-2025</button>
  <button aria-label="Notifications" class="relative ml-[20px] mr-[15px] h-8 w-[30px]">
    <svg width="20" height="20" viewBox="0 0 20 20"><path d="M0 0h20v15h-5v5l-5-5H0z"/><path stroke="#c9d6dd" stroke-width="1.300" d="M3.500 4.500h13M3.500 7.500h13M3.500 10.500h8"/></svg>
    <span class="absolute bottom-[-2px] right-0 flex size-5 items-center justify-center rounded-full border border-[#888] bg-[#d9e0e2] text-[12px] font-semibold">2</span>
  </button>
  <span class="mr-[5px] h-full border-l border-[#98a5ad]"></span>
</div>

<!-- Shared slicer icons -->
<svg width="0" height="0" class="absolute" aria-hidden="true">
  <symbol id="multi" viewBox="0 0 13 12"><path fill="none" stroke="#8a8a8a" stroke-width="1.100" d="M5 2.500h8M5 6.500h8M5 10.500h8M.5 2l1.300 1.300L4 .5M.5 6l1.300 1.300L4 4.500M.5 10l1.300 1.300L4 8.500"/></symbol>
  <symbol id="clear" viewBox="0 0 13 12"><path fill="#9a9a9a" d="M0 0h9.500v1.500L6 5.500v5L4 8.500v-3L0 1.500z"/><path stroke="#fff" stroke-width="2.800" d="M5.500 5.500l6.500 6M12 6L6.500 11.500"/><path stroke="#9a9a9a" stroke-width="1.300" d="M5.500 5.500l6.500 6M12 6L6.500 11.500"/></symbol>
</svg>

<script>
  const cols = document.getElementById('cols');
  'A B C D E F G H I J K L M N O P Q R S T U V W X Y Z AA AB'.split(' ').forEach(name => {
    const cell = document.createElement('div');
    cell.className = name === 'T'
      ? 'border-b border-r border-b-[#217346] border-r-[#b4b4b4] bg-[#d2d2d2] text-[#217346]'
      : 'border-r border-[#b4b4b4]';
    cell.textContent = name;
    cols.append(cell);
  });
  const rows = document.getElementById('rows');
  for (let i = 1; i <= 39; i++) {
    const cell = document.createElement('div');
    cell.className = i === 1
      ? 'h-4 border-b border-b-[#b4b4b4] border-r-2 border-r-[#217346] bg-[#d2d2d2] text-[#217346]'
      : 'h-4 border-b border-[#b4b4b4]';
    cell.textContent = i;
    rows.append(cell);
  }
</script>
</body>
</html>
